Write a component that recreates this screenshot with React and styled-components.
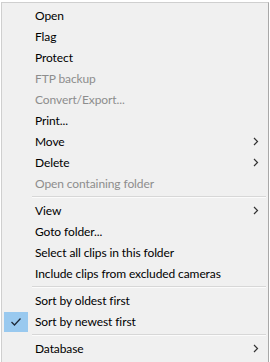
import React from "react";
import styled, { createGlobalStyle } from "styled-components";

const GlobalStyle = createGlobalStyle`
  html, body {
    margin: 0;
    padding: 0;
    background: #ffffff;
  }
  body {
    font-family: Lato, "Noto Sans", sans-serif;
  }
`;

const Page = styled.div`
  width: 270px;
  height: 362px;
  overflow: hidden;
  padding: 2px 0 0 1px;
  box-sizing: border-box;
`;

const Menu = styled.ul`
  list-style: none;
  margin: 0;
  width: 268px;
  min-height: 380px;
  box-sizing: border-box;
  padding: 2px 2px;
  background: #f0f0f0;
  border: 1px solid #cfcfcf;
  border-right-color: #a8a8a8;
  font-size: 12px;
  letter-spacing: -0.1px;
  color: #000;
`;

const Item = styled.li`
  display: flex;
  align-items: center;
  height: 21px;
  color: ${(p) => (p.$disabled ? "#8d8d8d" : "#000")};
`;

const CheckCell = styled.span`
  width: 24px;
  height: 20px;
  margin-right: 7px;
  display: flex;
  align-items: center;
  justify-content: center;
  background: ${(p) => (p.$checked ? "#99c9ef" : "transparent")};
`;

const Label = styled.span`
  flex: 1;
  white-space: nowrap;
`;

const Arrow = styled.span`
  width: 13px;
  display: flex;
  align-items: center;
  justify-content: flex-start;
`;

const Separator = styled.li`
  height: 6px;
  display: flex;
  align-items: center;
  padding-left: 28px;
  &::after {
    content: "";
    flex: 1;
    height: 1px;
    background: #d7d7d7;
    border-bottom: 1px solid #fbfbfb;
  }
`;

const Chevron = () => (
  <svg width="6" height="9" viewBox="0 0 6 9">
    <path d="M1 1 L4.5 4.5 L1 8" fill="none" stroke="#333" strokeWidth="1.2" />
  </svg>
);

const Check = () => (
  <svg width="12" height="10" viewBox="0 0 12 10">
    <path d="M1.5 5 L4.5 8 L10.5 1.5" fill="none" stroke="#1e2a3a" strokeWidth="1.3" />
  </svg>
);

const items = [
  { label: "Open" },
  { label: "Flag" },
  { label: "Protect" },
  { label: "FTP backup", disabled: true },
  { label: "Convert/Export...", disabled: true },
  { label: "Print..." },
  { label: "Move", sub: true },
  { label: "Delete", sub: true },
  { label: "Open containing folder", disabled: true },
  { sep: true },
  { label: "View", sub: true },
  { label: "Goto folder..." },
  { label: "Select all clips in this folder" },
  { label: "Include clips from excluded cameras" },
  { sep: true },
  { label: "Sort by oldest first" },
  { label: "Sort by newest first", checked: true },
  { sep: true },
  { label: "Database", sub: true },
];

export default function App() {
  return (
    <Page>
      <GlobalStyle />
      <Menu>
        {items.map((it, i) =>
          it.sep ? (
            <Separator key={i} />
          ) : (
            <Item key={i} $disabled={it.disabled}>
              <CheckCell $checked={it.checked}>{it.checked && <Check />}</CheckCell>
              <Label>{it.label}</Label>
              <Arrow>{it.sub && <Chevron />}</Arrow>
            </Item>
          )
        )}
      </Menu>
    </Page>
  );
}
